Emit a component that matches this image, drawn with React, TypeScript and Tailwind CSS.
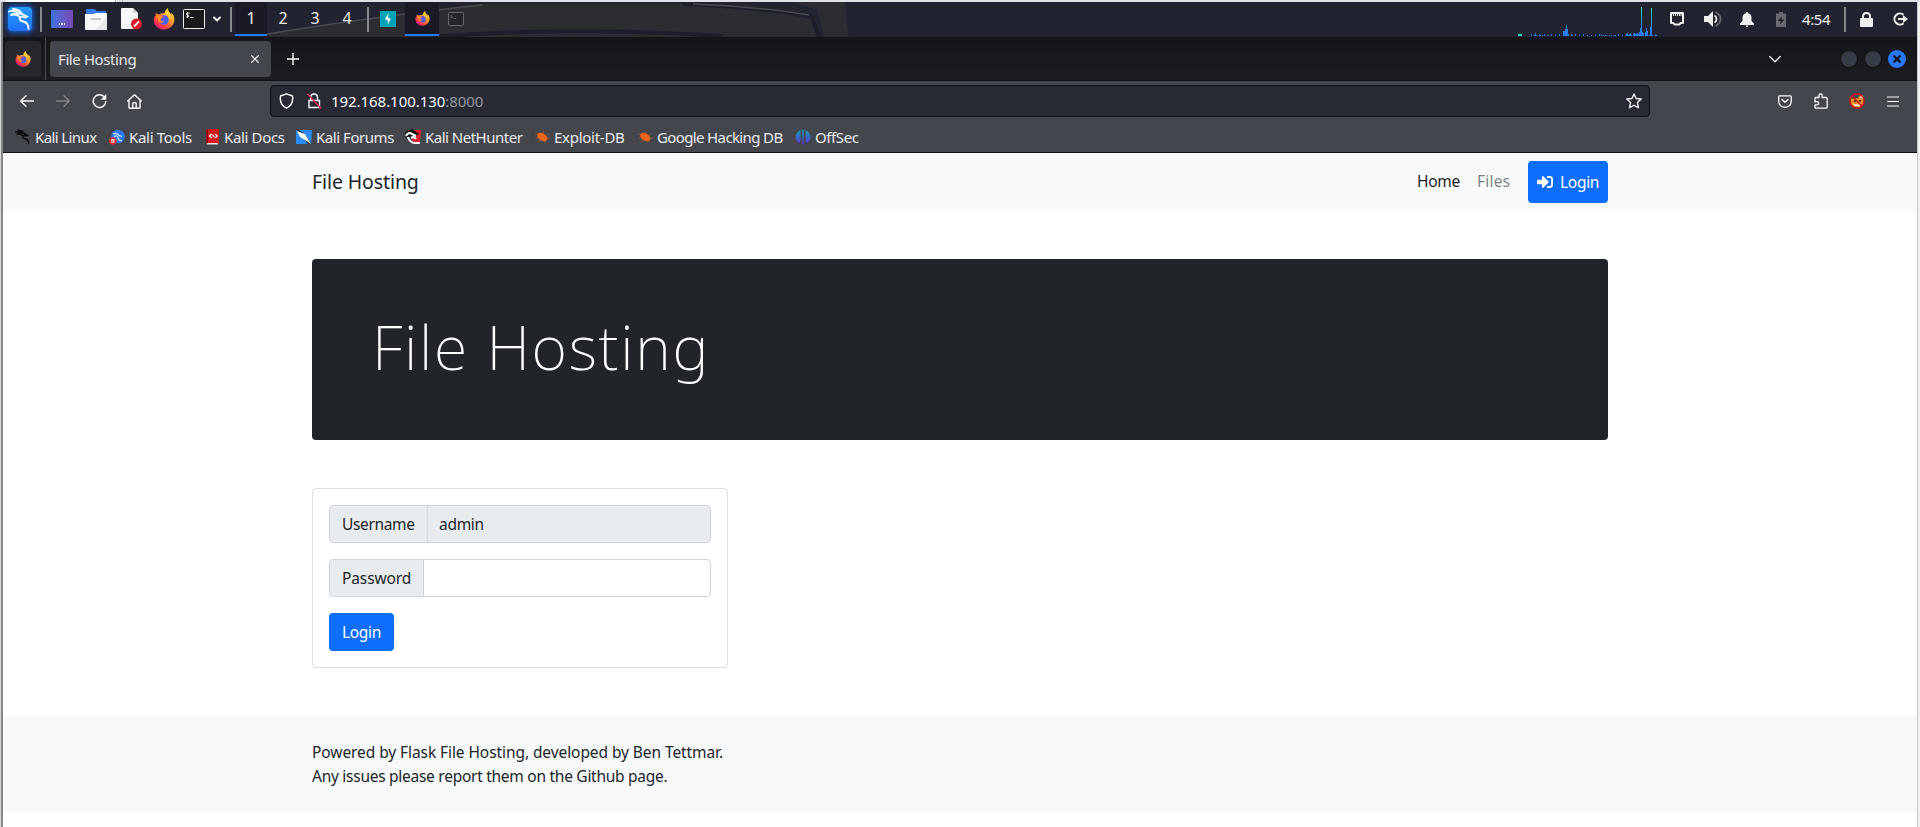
import { useId, type ReactNode } from "react";

function Firefox({ className }: { className: string }) {
  const id = useId().replace(/[^a-zA-Z0-9]/g, "");
  return (
    <svg viewBox="0 0 24 24" className={className}>
      <defs>
        <linearGradient id={`${id}a`} x1="0.85" y1="0.1" x2="0.2" y2="0.95">
          <stop offset="0" stopColor="#ffe03a" />
          <stop offset="0.4" stopColor="#ff9428" />
          <stop offset="0.7" stopColor="#ff4a3d" />
          <stop offset="1" stopColor="#e8186d" />
        </linearGradient>
        <linearGradient id={`${id}b`} x1="0" y1="0" x2="1" y2="1">
          <stop offset="0" stopColor="#7a45e0" />
          <stop offset="1" stopColor="#2f6fe8" />
        </linearGradient>
      </defs>
      <path
        fill={`url(#${id}a)`}
        d="M3 5C2.600 6.500 3 7.500 3 8C1 10 .5 12 1 15C2 20 6.500 23.500 12 23.500C18.500 23.500 23.500 18.500 23.300 12C23.200 8.500 21.500 6.200 20 5.200C20.300 6.300 20.200 7 20 7.500C19 4.500 16 4 16.500 0C13.500 1.200 12.600 4.500 12.500 6C10 5.500 8 6.200 6.700 7C5 6.700 3.600 6 3 5Z"
      />
      <circle cx="12" cy="13" r="5.200" fill={`url(#${id}b)`} />
      <path fill="#ff8a1f" d="M3 8.500C6 7 8 9 11.500 9.500C11 11 8.500 11 8.300 12.300C8.300 14 10 15 12 14.500C10.500 17.500 5.500 16.500 5 12Z" />
      <path fill="#ffd53a" d="M12.500 6C15.500 6.500 18 9.500 17.600 13C19.500 11 19 8 16.500 5.500L15.500 3Z" />
    </svg>
  );
}

const DRAGON =
  "M1 4.500C5 3 8 4 11 6.500C8 6 5 6.500 2.500 8C6 7.300 10 8 12 10.500M5 2C9 2.200 12.500 4 14 7L19 9.500L17 10.500L13.500 9.500C10.500 11.500 11.500 14 15 14.500C19 15 20.500 18 20.500 22";

function Dragon({ className, width = 1.6 }: { className: string; width?: number }) {
  return (
    <svg viewBox="0 0 24 24" className={className} fill="none" stroke="currentColor" strokeWidth={width} strokeLinecap="round">
      <path d={DRAGON} />
    </svg>
  );
}

function Prompt({ className }: { className: string }) {
  return (
    <svg viewBox="0 0 22 20" className={className} fill="none" stroke="currentColor">
      <rect x="0.500" y="0.500" width="21" height="19" rx="0.800" fill="#17191a" />
      <path strokeWidth="1" d="M6.500 4H4.500Q3.300 4 3.300 4.900T4.500 5.900T5.800 6.900T4.700 7.900H3.200M4.600 3V9M7 8.500H10.500" />
    </svg>
  );
}

function DimPrompt() {
  return (
    <svg viewBox="0 0 16 14" className="ml-[9px] h-[14px] w-4 text-[#67686b]" fill="none" stroke="currentColor">
      <rect x="0.500" y="0.500" width="15" height="13" rx="0.800" fill="#242528" />
      <path strokeWidth="0.900" d="M4.600 2.800L2.600 3.500L4.600 5.300L2.600 6M5.500 6.500H8" />
    </svg>
  );
}

function Line({ className, children, box = "0 0 16 16" }: { className: string; children: ReactNode; box?: string }) {
  return (
    <svg viewBox={box} className={className} fill="none" stroke="currentColor" strokeWidth="1.300" strokeLinecap="round" strokeLinejoin="round">
      {children}
    </svg>
  );
}

const BARS: [number, number][] = [
  [13, 2], [16, 1], [17, 3], [18, 1], [21, 2], [22, 1], [24, 1], [26, 2], [29, 1], [30, 1], [33, 2], [37, 1], [41, 2],
  [45, 5], [46, 5], [47, 7], [48, 11], [49, 7], [50, 2], [53, 2], [54, 1], [57, 2], [61, 1], [65, 2], [69, 1], [73, 1],
  [77, 1], [81, 2], [83, 2], [85, 1], [87, 1], [88, 1], [91, 1], [93, 1], [96, 1], [97, 1], [100, 2], [104, 1],
  [108, 2], [109, 3], [110, 1], [111, 2], [112, 3], [113, 1], [115, 2], [116, 3], [117, 2], [118, 2], [119, 3], [120, 2],
  [121, 4], [122, 8], [123, 29], [124, 4], [125, 3], [127, 4], [128, 8], [129, 5], [131, 1], [132, 9], [133, 28], [134, 1],
  [137, 2], [138, 1],
];

function Graph() {
  return (
    <svg viewBox="0 0 140 29" className="h-[29px] w-[140px]" shapeRendering="crispEdges">
      <defs>
        <linearGradient id="load" gradientUnits="userSpaceOnUse" x1="0" y1="0" x2="0" y2="29">
          <stop offset="0" stopColor="#2ce8d2" />
          <stop offset="0.700" stopColor="#2a84f0" />
          <stop offset="1" stopColor="#2777ff" />
        </linearGradient>
      </defs>
      <rect x="0" y="27" width="4" height="2" fill="#28d9c8" />
      {BARS.map(([x, h]) => (
        <rect key={x} x={x} y={29 - h} width="1" height={h} fill="url(#load)" />
      ))}
    </svg>
  );
}

function Sep({ className }: { className: string }) {
  return <div className={`h-[25px] w-0.5 bg-[#88898e] ${className}`} />;
}

function Panel() {
  return (
    <div className="relative flex h-[35px] items-center overflow-hidden bg-[#222330] pb-px text-[#eeeeec]">
      <svg viewBox="0 0 850 35" className="absolute left-0 top-0 h-[35px] w-[850px]">
        <path fill="#2c2c31" d="M264 32L470 2H740L808 15L815 35H264Z" />
        <path fill="#2c2c31" d="M790 0H842Q843 18 846 35H821L814 8Z" />
        <path fill="none" stroke="#1d1e2b" strokeWidth="4" d="M430 35Q560 24 720 34M680 2Q760 5 809 15L816 35" />
        <path fill="none" stroke="#4a4b50" strokeWidth="1.500" d="M264 32Q390 12 480 3M690 2Q760 5 806 13" />
      </svg>
      <div className="relative flex w-full items-center">
        <div className="ml-[5px] flex size-6 items-center justify-center rounded-sm bg-linear-to-b from-[#279af8] to-[#2070fb] shadow-[0_0_5px_2px_#1557bd]">
          <Dragon className="size-6 text-white" width={1.8} />
        </div>
        <Sep className="ml-2" />
        <div className="ml-[9px] flex h-[18px] w-[22px] items-end justify-center rounded-[1px] bg-linear-to-r from-[#3b72df] to-[#7548b4] pb-[3px]">
          <div className="flex gap-px">
            <i className="h-0.5 w-[1.5px] bg-white/80" />
            <i className="h-0.5 w-[1.5px] bg-white/80" />
            <i className="h-0.5 w-[1.5px] bg-white/80" />
          </div>
        </div>
        <svg viewBox="0 0 22 21" className="ml-3 h-[21px] w-[22px]">
          <path fill="#367bea" d="M1 1Q1 0 2 0H9L12 2H20Q21 2 21 3V8H1Z" />
          <path fill="#f8f8f8" d="M0 5H8L11 4H22V20Q22 21 21 21H1Q0 21 0 20Z" />
          <path fill="#e8e8e8" d="M22 8V21H10Z" />
          <path stroke="#b8b8b8" strokeWidth="1.600" strokeLinecap="round" d="M6.500 10H15.500" />
        </svg>
        <svg viewBox="0 0 21 22" className="ml-[14px] h-[22px] w-[21px]">
          <path fill="#f6f6f6" d="M0 1Q0 0 1 0H12L17 5V20Q17 21 16 21H1Q0 21 0 20Z" />
          <path fill="#cfcfcf" d="M12 0L17 5H12Z" />
          <circle cx="15.500" cy="16" r="5.500" fill="#d81b28" />
          <path stroke="#fff" strokeWidth="1.800" d="M13 18.500L18 13.500" />
        </svg>
        <Firefox className="ml-[11px] size-[22px]" />
        <Prompt className="ml-2 h-5 w-[22px]" />
        <Line className="ml-2 h-2 w-2" box="0 0 8 8">
          <path strokeWidth="2" d="M1 2.500L4 5.500L7 2.500" />
        </Line>
        <Sep className="ml-[9px]" />
        <div className="ml-[3px] flex text-[16px]/[32px] font-[Noto_Sans]">
          <div className="h-[34px] w-8 border-b-2 border-[#2777ff] bg-[#191a25] text-center">1</div>
          <div className="w-8 text-center">2</div>
          <div className="w-8 text-center">3</div>
          <div className="w-8 text-center">4</div>
        </div>
        <Sep className="ml-1" />
        <svg viewBox="0 0 16 16" className="ml-[11px] size-4">
          <path fill="#00a4b8" d="M0 0H16V16H0Z" />
          <path fill="#fff" d="M8.500 2L8 6.500L10.800 8L7.500 14L8 9.700L5 8Z" />
        </svg>
        <div className="ml-[9px] flex h-[34px] w-[34px] items-center justify-center border-b-2 border-[#2777ff] bg-[#191a25]">
          <Firefox className="size-[15px]" />
        </div>
        <DimPrompt />

        <div className="ml-auto flex items-center">
          <div className="flex h-[34px] items-end">
            <Graph />
          </div>
          <svg viewBox="0 0 16 14" className="ml-[11px] h-[14px] w-4">
            <path fill="none" stroke="currentColor" strokeWidth="2" strokeLinejoin="round" d="M2 1H14V11H11.500L10.500 12.500H5.500L4.500 11H2Z" />
            <path stroke="currentColor" d="M4.500 1V4M6.500 1V4M8.500 1V4M10.500 1V4M12 1V4" />
          </svg>
          <svg viewBox="0 0 18 16" className="ml-[19px] h-4 w-[18px]">
            <path fill="currentColor" d="M0 5H4L9 0V16L4 11H0Z" />
            <path fill="none" stroke="currentColor" strokeWidth="1.800" d="M10.500 4.500Q12.500 5.500 12.500 8T10.500 11.500" />
            <path fill="none" stroke="#6b6c72" strokeWidth="1.800" d="M11.500 1Q16.500 3.500 16.500 8T11.500 15" />
          </svg>
          <svg viewBox="0 0 14 15" className="ml-[18px] h-[15px] w-[14px]" fill="currentColor">
            <path d="M7 0Q8 0 8 1.300Q11.500 2 11.500 6V9L14 11.500V13H0V11.500L2.500 9V6Q2.500 2 6 1.300Q6 0 7 0ZM5.500 13.500H8.500Q8 15 7 15T5.500 13.500Z" />
          </svg>
          <svg viewBox="0 0 10 15" className="ml-[22px] h-[15px] w-[10px]">
            <path fill="#696a70" d="M3 0H7V1.500H10V15H0V1.500H3Z" />
            <path fill="#22232e" d="M6 4L1.500 9H4.500L4 12.500L8.500 7.500H5.500Z" />
          </svg>
          <span className="ml-4 w-[30px] whitespace-nowrap text-[15px]/[20px] tracking-[-0.4px] font-[Noto_Sans]">4:54</span>
          <Sep className="ml-3" />
          <svg viewBox="0 0 13 15" className="ml-[14px] h-[15px] w-[13px]">
            <path fill="none" stroke="currentColor" strokeWidth="2" d="M3 7V4.500Q3 1 6.500 1T10 4.500V7" />
            <rect y="6" width="13" height="9" rx="1" fill="currentColor" />
          </svg>
          <svg viewBox="0 0 15 14" className="ml-5 mr-[9px] h-[14px] w-[15px]" fill="none" stroke="currentColor" strokeWidth="2">
            <path d="M10.500 2.800A5.500 5.500 0 1 0 10.500 11.200" />
            <path d="M5 7H11" />
            <path fill="currentColor" stroke="none" d="M10 3L15 7L10 11Z" />
          </svg>
        </div>
      </div>
    </div>
  );
}

function Tabs() {
  return (
    <div className="flex h-11 items-center border-b border-[#101114] bg-linear-to-b from-[#141518] to-[#1c1d21] pb-0 text-[#fbfbfe]">
      <div className="ml-0.5 flex size-9 items-center justify-center rounded bg-[#27282c]">
        <Firefox className="size-4" />
      </div>
      <div className="ml-1 h-full w-px bg-[#4a4b50]" />
      <div className="ml-1 flex h-9 w-[221px] items-center rounded bg-[#44464e] pl-2 pr-3">
        <span className="mt-px whitespace-nowrap text-[15px]/[20px] tracking-[-0.4px] text-[#e6e6e9] font-[Noto_Sans]">File Hosting</span>
        <Line className="ml-auto size-2" box="0 0 8 8">
          <path strokeWidth="1.100" d="M0.500 0.500L7.500 7.500M7.500 0.500L0.500 7.500" />
        </Line>
      </div>
      <Line className="ml-4 mt-px size-3" box="0 0 12 12">
        <path strokeWidth="1.400" strokeLinecap="butt" d="M6 0V12M0 6H12" />
      </Line>
      <Line className="ml-auto h-2 w-3" box="0 0 12 8">
        <path d="M0.700 1.500L6 6.700L11.300 1.500" />
      </Line>
      <div className="ml-[59px] size-[18px] rounded-full border border-[#0c0d10] bg-[#363b48]" />
      <div className="ml-1.5 size-[18px] rounded-full border border-[#0c0d10] bg-[#363b48]" />
      <svg viewBox="0 0 18 18" className="ml-1.5 mr-[11px] size-[18px]">
        <circle cx="9" cy="9" r="9" fill="#2777ff" />
        <path stroke="#121316" strokeWidth="2.400" d="M5.500 5.500L12.500 12.500M12.500 5.500L5.500 12.500" />
      </svg>
    </div>
  );
}

function Toolbar() {
  return (
    <div className="flex h-10 items-center text-[#fbfbfe]">
      <Line className="ml-[17px] h-3 w-[14px]" box="0 0 14 12">
        <path d="M6 0.700L0.700 6L6 11.300M1 6H13.500" />
      </Line>
      <Line className="ml-[22px] h-3 w-[14px] text-[#85868b]" box="0 0 14 12">
        <path d="M8 0.700L13.300 6L8 11.300M13 6H0.500" />
      </Line>
      <Line className="ml-[22px] size-[15px]" box="0 0 15 15">
        <path strokeWidth="1.400" d="M12.300 3A6.300 6.300 0 1 0 13.800 7.500" />
        <path fill="currentColor" strokeWidth="0.500" d="M14 0.800V5.500H9.300Z" />
      </Line>
      <Line className="ml-5 size-[15px]" box="0 0 15 15">
        <path strokeWidth="1.400" d="M0.700 7L7.500 0.800L14.300 7M2 6V13.500Q2 14.300 2.800 14.300H12.200Q13 14.300 13 13.500V6M5.800 14V9.500Q5.800 8.500 7.500 8.500T9.200 9.500V14" />
      </Line>
      <div className="ml-32 flex h-8 w-[1380px] items-center rounded border border-[#0e0f12] bg-[#272935]">
        <Line className="ml-2 h-4 w-[15px]" box="0 0 15 16">
          <path strokeWidth="1.400" d="M7.500 0.800L13.500 3Q14.800 11.500 7.500 15.200Q0.200 11.500 1.500 3Z" />
        </Line>
        <svg viewBox="0 0 15 16" className="ml-[13px] h-4 w-[15px]" fill="none" stroke="currentColor" strokeWidth="1.400">
          <path d="M3.800 7V4Q3.800 1 7 1T10.500 4V7M2 7.500H12.500V14.500H2Z" />
          <path stroke="#e22850" strokeWidth="1.500" d="M0.500 0.800L14 15.500" />
        </svg>
        <span className="ml-[9px] whitespace-nowrap text-[15px]/[20px] tracking-[-0.05px] font-[Noto_Sans]">
          192.168.100.130<span className="text-[#96979d]">:8000</span>
        </span>
        <Line className="ml-auto mr-[7px] size-4">
          <path d="M8 0.900L10.100 5.500L15.200 6L11.400 9.500L12.500 14.800L8 12.200L3.500 14.800L4.600 9.500L0.800 6L5.900 5.500Z" />
        </Line>
      </div>
      <Line className="ml-32 h-[13px] w-[14px]" box="0 0 14 13">
        <path d="M1.500 0.800H12.500Q13.300 0.800 13.300 1.800V6Q13 12 7 12.300Q1 12 0.700 6V1.800Q0.700 0.800 1.500 0.800ZM4 4.500L7 7.300L10 4.500" />
      </Line>
      <Line className="ml-[22px] h-4 w-[14px]" box="0 0 14 16">
        <path d="M1 9V5.500Q1 4.500 2 4.500H5V2.500Q5 0.800 6.600 0.800T8.200 2.500V4.500H12Q13.200 4.500 13.200 5.500V14.200Q13.200 15.200 12 15.200H2Q1 15.200 1 14.200V11.800H3Q4.600 11.800 4.600 10.200T3 8.700H1" />
      </Line>
      <svg viewBox="0 0 16 16" className="ml-[21px] size-4">
        <path fill="#f08a1c" d="M1.500 5L5 6L9 5L11 2L14.500 4V11L11 14.500L4 14L2 11Z" />
        <path fill="#f7ead8" d="M10.500 4L14 2L14.500 6ZM3 10.500L6 13L10 13.500L13 10L9 11.500Z" />
        <path fill="#4a2a16" d="M5 7.500H7V9H5ZM10 7H12V8.500H10Z" />
        <circle cx="8" cy="8" r="7.200" fill="none" stroke="#c3161c" strokeWidth="1.500" />
        <path stroke="#c3161c" strokeWidth="1.500" d="M3 3L13 13" />
      </svg>
      <Line className="ml-[22px] h-[11px] w-3" box="0 0 12 11">
        <path strokeWidth="1.200" strokeLinecap="butt" d="M0 1H12M0 5.500H12M0 10H12" />
      </Line>
    </div>
  );
}

function ExploitBug() {
  return (
    <svg viewBox="0 0 15 14" className="h-[14px] w-[15px]">
      <ellipse cx="7.300" cy="7" rx="5.600" ry="3.500" transform="rotate(33 7.300 7)" fill="#ee6518" />
      <path stroke="#d9601c" strokeWidth="0.600" fill="none" d="M4 4.500L0 4M3 7L0.500 8.500M6 10L3 11.500M8 4L8.500 1.500M10.500 5.500L13 4M11 8.500L15 8M9.500 11L10 13" />
    </svg>
  );
}

function Mark({ className, icon, iconBox, label }: { className: string; icon: ReactNode; iconBox: string; label: string }) {
  return (
    <div className={`flex shrink-0 items-center whitespace-nowrap ${className}`}>
      <div className={`flex shrink-0 items-center ${iconBox}`}>{icon}</div>
      <span>{label}</span>
    </div>
  );
}

function Bookmarks() {
  return (
    <div className="flex h-[31px] items-center pl-3 text-[15px]/[20px] text-[#ececef] font-[Noto_Sans]">
      <Mark className="w-[94px] tracking-[-0.6px]" iconBox="w-5" label="Kali Linux" icon={<Dragon className="size-4 text-[#0b0b0d]" width={2.2} />} />
      <Mark
        className="w-[97px] tracking-[-0.3px]"
        iconBox="w-5"
        label="Kali Tools"
        icon={
          <svg viewBox="0 0 16 16" className="size-4">
            <circle cx="9" cy="7.500" r="6.800" fill="#2a7af5" />
            <path fill="none" stroke="#dcecff" strokeWidth="1.200" d="M4 5Q8 3 10 6.500L13 7.500M5 7.500Q9 6 9 8.500T13 12" />
            <circle cx="3.800" cy="12" r="3.800" fill="#e0282f" />
            <path stroke="#fff" strokeWidth="0.900" d="M2 10.700H5.800M3 10.700V14M4.800 10.700V14" />
          </svg>
        }
      />
      <Mark
        className="w-[90px] tracking-[-0.35px]"
        iconBox="w-[18px]"
        label="Kali Docs"
        icon={
          <svg viewBox="0 0 13 16" className="h-4 w-[13px]">
            <path fill="#d9141a" d="M0 1L2 0H13V15H0Z" />
            <path fill="#8f0c11" d="M0 1L2 0V14L0 15Z" />
            <path fill="#e9e9e9" d="M1 14H12V15.500H1Z" />
            <path stroke="#fff" strokeWidth="1.200" fill="none" d="M5.500 5L3.500 7L6 9M6.300 5.500L8.700 8.500M9 5L11.300 7L9.300 9" />
          </svg>
        }
      />
      <Mark
        className="w-[109px] tracking-[-0.45px]"
        iconBox="w-[20px]"
        label="Kali Forums"
        icon={
          <svg viewBox="0 0 16 16" className="size-4">
            <path fill="#2a8af6" d="M0 1H16L15 15H0Z" />
            <path fill="#101216" d="M0 0L8 4L15 14L12 15Z" />
            <path fill="#fff" d="M1 2L9 5L12 10L15 15L9 11L4 8Z" />
          </svg>
        }
      />
      <Mark
        className="w-[130px] tracking-[-0.5px]"
        iconBox="w-[20px]"
        label="Kali NetHunter"
        icon={
          <svg viewBox="0 0 16 16" className="size-4">
            <path fill="#e0202c" d="M3 1H16L15 13H8Z" />
            <path fill="#101216" d="M0 3L7 0L14 5L9 8L4 10L0 7Z" />
            <path fill="none" stroke="#fff" strokeWidth="2.200" d="M1 7Q3 2.500 7 5L11 7M3 8Q5 14 10 14L15 14M6 9Q9 7 11 10" />
          </svg>
        }
      />
      <Mark className="w-[103px] tracking-[-0.27px]" iconBox="w-[19px]" label="Exploit-DB" icon={<ExploitBug />} />
      <Mark className="w-[157px] tracking-[-0.63px]" iconBox="w-[19px]" label="Google Hacking DB" icon={<ExploitBug />} />
      <Mark
        className="w-[90px] tracking-[-0.4px]"
        iconBox="w-[20px]"
        label="OffSec"
        icon={
          <svg viewBox="0 0 16 16" className="size-4">
            <defs>
              <linearGradient id="offsec" x1="0" y1="0" x2="0" y2="1">
                <stop offset="0" stopColor="#16a3b8" />
                <stop offset="1" stopColor="#5a2fd0" />
              </linearGradient>
            </defs>
            <path fill="url(#offsec)" d="M5 1.200V14.500Q0.500 12 0.500 8T5 1.200ZM5.500 1V12L6 12L6 1ZM7.200 0.500H8.800V15.500H7.200ZM10 1V12L10.500 12V1ZM11 1.200V14.500Q15.500 12 15.500 8T11 1.200Z" />
          </svg>
        }
      />
    </div>
  );
}

function Page() {
  return (
    <div className="h-[674px] bg-white text-[15.500px]/[24px] text-[#212529] font-[Noto_Sans]">
      <nav className="h-[58px] bg-[#f8f9fa]">
        <div className="ml-[309px] flex h-full w-[1296px] items-center">
          <span className="whitespace-nowrap text-[19.500px]/[30px] tracking-[-0.1px]">File Hosting</span>
          <span className="-mt-0.5 ml-auto w-[60px] whitespace-nowrap tracking-[-0.25px] text-black/90">Home</span>
          <span className="-mt-0.5 w-[51px] whitespace-nowrap tracking-[0.2px] text-black/50">Files</span>
          <div className="flex h-[42px] w-20 items-center rounded bg-[#0d6efd] text-white">
            <svg viewBox="0 0 512 512" className="ml-[9px] size-4" fill="currentColor">
              <path d="M416 448h-84c-7 0-12-5-12-12v-40c0-7 5-12 12-12h84c18 0 32-14 32-32V160c0-18-14-32-32-32h-84c-7 0-12-5-12-12V76c0-7 5-12 12-12h84c53 0 96 43 96 96v192c0 53-43 96-96 96zM369 239 201 71c-15-15-41-4-41 17v96H24c-13 0-24 11-24 24v96c0 13 11 24 24 24h136v96c0 21 26 32 41 17l168-168c9-9 9-25 0-34z" />
            </svg>
            <span className="ml-[7px] tracking-[-0.3px]">Login</span>
          </div>
        </div>
      </nav>
      <main className="ml-[309px] w-[1296px] py-12">
        <div className="flex h-[181px] items-center rounded bg-[#212529] pb-1.5 pl-[60px]">
          <h1 className="whitespace-nowrap text-[61px]/[77px] tracking-[1.700px] font-extralight text-white">File Hosting</h1>
        </div>
        <form className="mt-12 h-[180px] w-[416px] rounded border border-[#dfdfdf] p-4">
          <div className="flex h-[38px] overflow-hidden rounded border border-[#ced4da] bg-[#e9ecef]">
            <label className="flex w-[98px] items-center border-r border-[#ced4da] pl-3 tracking-[-0.35px]">Username</label>
            <span className="flex items-center pl-[11px] tracking-[-0.3px]">admin</span>
          </div>
          <div className="mt-4 flex h-[38px] overflow-hidden rounded border border-[#ced4da]">
            <label className="flex w-[94px] items-center border-r border-[#ced4da] bg-[#e9ecef] pl-3 tracking-[-0.12px]">Password</label>
          </div>
          <button type="button" className="mt-4 flex h-[38px] w-[65px] items-center justify-center rounded bg-[#0d6efd] tracking-[-0.3px] text-white">
            Login
          </button>
        </form>
      </main>
      <footer className="h-24 bg-[#f8f9fa] pl-[309px] pt-6">
        <p className="tracking-[-0.08px]">Powered by Flask File Hosting, developed by Ben Tettmar.</p>
        <p className="tracking-[-0.27px]">Any issues please report them on the Github page.</p>
      </footer>
    </div>
  );
}

export default function App() {
  return (
    <div className="flex h-[827px] w-[1920px] flex-col overflow-hidden bg-white">
      <div className="flex h-0.5 shrink-0 bg-[#dfe3e8]">
        <div className="ml-1.5 w-[109px] bg-white" />
        <div className="ml-0 w-2 border-x border-[#b5b9be]" />
      </div>
      <div className="flex flex-1 border-l border-[#d8d8d8]">
        <div className="w-0.5 bg-[#858585]" />
        <div className="w-[1914px]">
          <Panel />
          <Tabs />
          <div className="h-[72px] border-b border-[#0e0f12] bg-[#44464e]">
            <Toolbar />
            <Bookmarks />
          </div>
          <Page />
        </div>
        <div className="w-[3px] border-l border-[#c8c8c8] bg-[#f2f2f2]" />
      </div>
    </div>
  );
}
